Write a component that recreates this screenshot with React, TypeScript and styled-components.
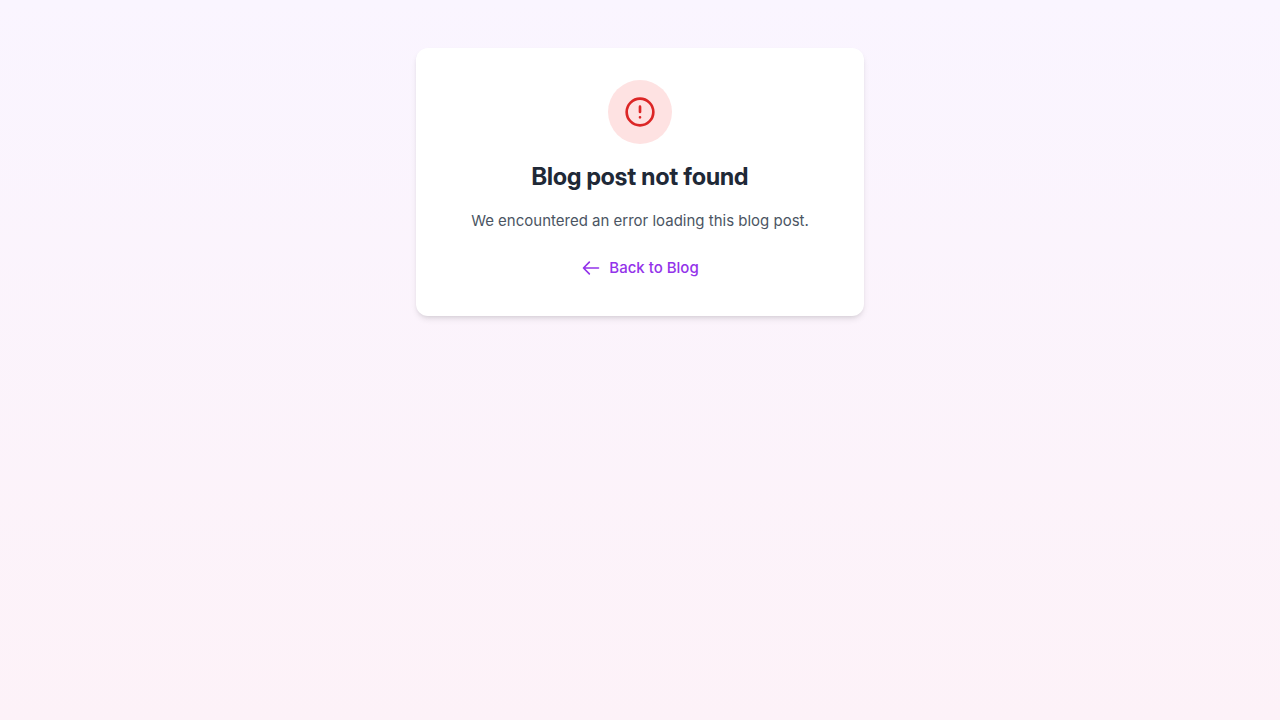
import React from "react";
import styled, { createGlobalStyle } from "styled-components";

const GlobalStyle = createGlobalStyle`
  *, *::before, *::after { box-sizing: border-box; }
  body {
    margin: 0;
    font-family: Inter, "Liberation Sans", sans-serif;
    font-size: 15px;
    line-height: 24px;
  }
`;

const Page = styled.main`
  min-height: 100vh;
  padding: 48px 16px;
  background: linear-gradient(to bottom, #faf5ff, #fdf2f8);
`;

const Card = styled.section`
  max-width: 448px;
  margin: 0 auto;
  padding: 32px 32px 36px;
  border-radius: 12px;
  background: #fff;
  text-align: center;
  box-shadow: 0 4px 6px -1px rgba(0, 0, 0, 0.1), 0 2px 4px -2px rgba(0, 0, 0, 0.1);
`;

const IconBadge = styled.div`
  display: flex;
  align-items: center;
  justify-content: center;
  width: 64px;
  height: 64px;
  margin: 0 auto 16px;
  border-radius: 50%;
  background: #fee2e2;
  color: #dc2626;
`;

const Title = styled.h1`
  margin: 0 0 14px;
  color: #1f2937;
  font-family: "Inter Display", Inter, "Liberation Sans", sans-serif;
  font-size: 24px;
  font-weight: 700;
  line-height: 34px;
`;

const Message = styled.p`
  margin: 0 0 22px;
  color: #4b5563;
  line-height: 26px;
`;

const BackLink = styled.a`
  display: flex;
  align-items: center;
  justify-content: center;
  gap: 8px;
  width: fit-content;
  margin: 0 auto;
  color: #9333ea;
  font-weight: 500;
  text-decoration: none;

  &:hover { color: #7e22ce; }
`;

export default function App() {
  return (
    <>
      <GlobalStyle />
      <Page>
        <Card>
          <IconBadge>
            <svg width="32" height="32" viewBox="0 0 24 24" fill="none" stroke="currentColor" strokeWidth="2" strokeLinecap="round" strokeLinejoin="round" aria-hidden="true">
              <circle cx="12" cy="12" r="10" />
              <path d="M12 8v4M12 16h.01" />
            </svg>
          </IconBadge>
          <Title>Blog post not found</Title>
          <Message>We encountered an error loading this blog post.</Message>
          <BackLink href="#blog">
            <svg width="20" height="20" viewBox="0 0 24 24" fill="none" stroke="currentColor" strokeWidth="2" strokeLinecap="round" strokeLinejoin="round" aria-hidden="true">
              <path d="M10 19l-7-7m0 0l7-7m-7 7h18" />
            </svg>
            Back to Blog
          </BackLink>
        </Card>
      </Page>
    </>
  );
}
